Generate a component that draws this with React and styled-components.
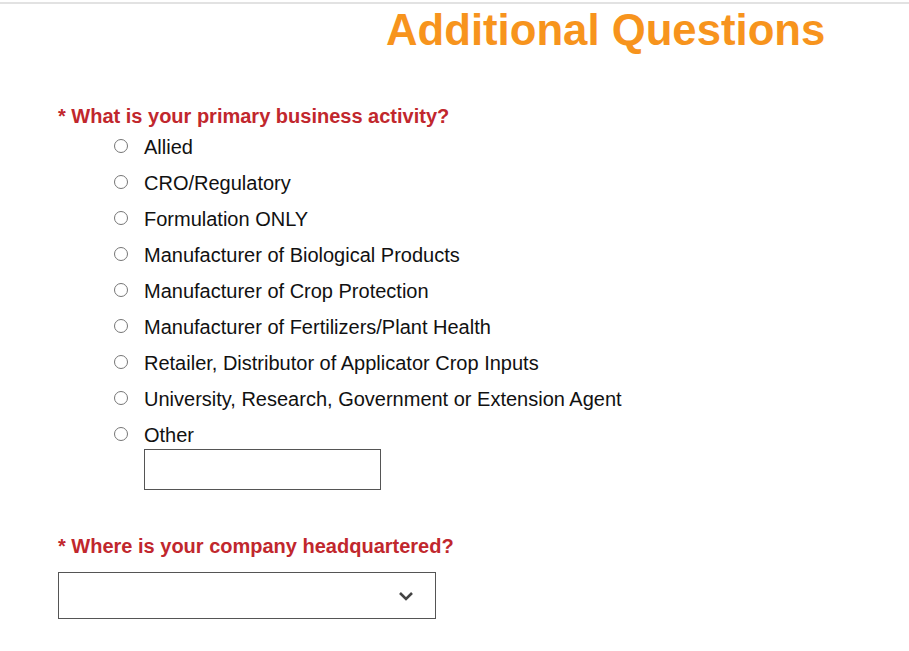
import React from "react";
import styled, { createGlobalStyle } from "styled-components";

const GlobalStyle = createGlobalStyle`
  html, body {
    margin: 0;
    padding: 0;
    background: #fff;
    font-family: "Liberation Sans", Arial, sans-serif;
  }
`;

const Page = styled.div`
  border-top: 2px solid #e2e2e2;
  margin-top: 2px;
  padding: 0 0 30px 58px;
`;

const Title = styled.h1`
  margin: 0;
  padding: 2px 0 0 328px;
  font-size: 43.7px;
  font-weight: bold;
  color: #f7941d;
  line-height: 48px;
`;

const Question = styled.div`
  margin-top: ${(p) => p.top}px;
`;

const Label = styled.div`
  font-size: 20px;
  font-weight: bold;
  color: #c1272d;
  line-height: 22px;
`;

const Options = styled.div`
  display: flex;
  flex-direction: column;
  padding-left: 56px;
  margin-top: 2px;
`;

const Option = styled.label`
  display: flex;
  align-items: center;
  height: 36px;
  font-size: 20px;
  color: #111;
`;

const Radio = styled.span`
  width: 12px;
  height: 12px;
  border: 1px solid #767676;
  border-radius: 50%;
  margin-right: 16px;
  margin-top: -3px;
`;

const OtherInput = styled.div`
  margin: -4px 0 0 30px;
  width: 235px;
  height: 39px;
  border: 1px solid #555;
`;

const Select = styled.div`
  margin-top: 15px;
  height: 45px;
  border: 1px solid #555;
  display: flex;
  align-items: center;
  justify-content: flex-end;
  padding-right: 21px;
  box-sizing: content-box;
  width: 355px;
`;

const options = [
  "Allied",
  "CRO/Regulatory",
  "Formulation ONLY",
  "Manufacturer of Biological Products",
  "Manufacturer of Crop Protection",
  "Manufacturer of Fertilizers/Plant Health",
  "Retailer, Distributor of Applicator Crop Inputs",
  "University, Research, Government or Extension Agent",
  "Other",
];

export default function App() {
  return (
    <>
      <GlobalStyle />
      <Page>
        <Title>Additional Questions</Title>
        <Question top={51}>
          <Label>* What is your primary business activity?</Label>
          <Options>
            {options.map((o) => (
              <Option key={o}>
                <Radio />
                {o}
              </Option>
            ))}
            <OtherInput />
          </Options>
        </Question>
        <Question top={45}>
          <Label>* Where is your company headquartered?</Label>
          <Select>
            <svg width="16" height="10" viewBox="0 0 16 10">
              <path d="M2 2l6 6 6-6" fill="none" stroke="#444" strokeWidth="2.6" />
            </svg>
          </Select>
        </Question>
      </Page>
    </>
  );
}
